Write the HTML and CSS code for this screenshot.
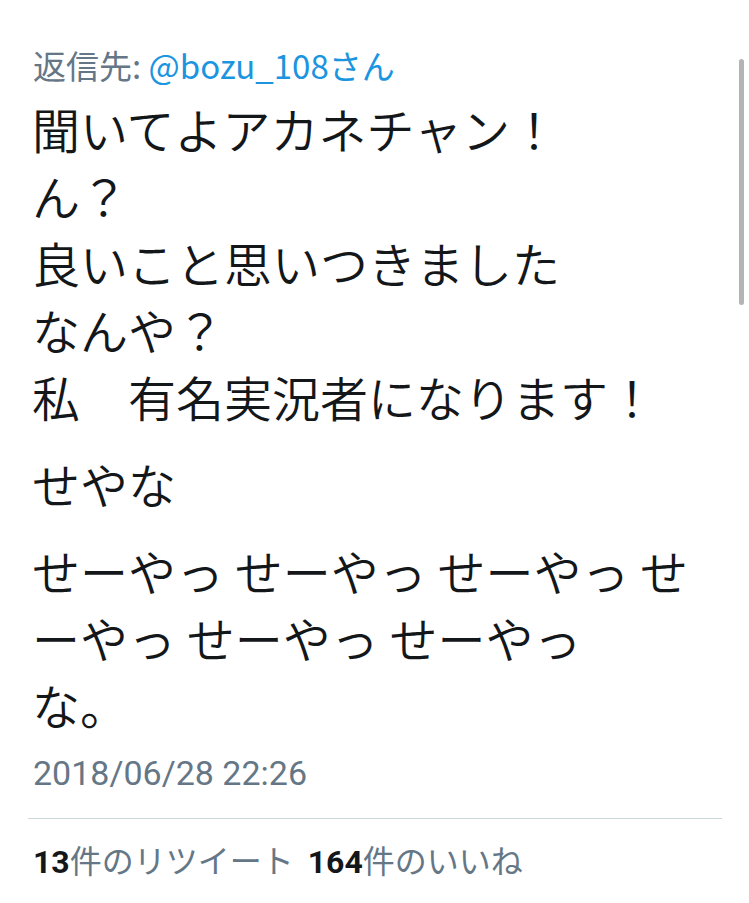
FILE: index.html
```html
<!DOCTYPE html>
<html lang="ja">
  <head>
    <meta charset="UTF-8" />
    <meta name="viewport" content="width=device-width, initial-scale=1.0" />
    <title>ツイート</title>
    <link rel="stylesheet" href="styles.css">
  </head>
  <body>
    <div class="tweet">
      <p class="reply">返信先: <a href="#">@bozu_108さん</a></p>

      <div class="tekst">
        <p>聞いてよアカネチャン！<br>ん？<br>良いこと思いつきました<br>なんや？<br>私　有名実況者になります！</p>
        <p>せやな</p>
        <p>せーやっ せーやっ せーやっ せーやっ せーやっ せーやっ<br>な。</p>
      </div>

      <p class="dato">2018/06/28 22:26</p>

      <div class="stats">
        <span><b>13</b>件のリツイート</span>
        <span><b>164</b>件のいいね</span>
      </div>
    </div>
    <!--scrollbar fra skærmbilledet-->
    <div class="scroll"></div>
  </body>
</html>
```

FILE: styles.css
```css
body {
  margin: 0;
  background-color: #fff;
  color: #14171a;
  font-family: "Noto Sans CJK JP", "Noto Sans", sans-serif;
}
.tweet {
  padding: 45px 27px 0 28px;
}
p {
  margin: 0;
}
.reply {
  padding-left: 5px;
  font-size: 33px;
  line-height: 40px;
  color: #657786;
}
.reply a {
  color: #1b95e0;
  text-decoration: none;
}
.tekst {
  padding-left: 4px;
  margin-top: 10px;
  font-size: 48px;
  font-weight: 350;
  line-height: 67px;
}
.tekst p {
  margin-bottom: 20px;
}
.tekst p:last-child {
  margin-bottom: 0;
}
.dato {
  padding-left: 5px;
  margin-top: 15px;
  padding-bottom: 25px;
  border-bottom: 1px solid #ccd6dd;
  font-family: Roboto, "Noto Sans CJK JP", sans-serif;
  font-size: 34px;
  line-height: 40px;
  color: #657786;
}
.stats {
  display: flex;
  gap: 14px;
  padding-left: 5px;
  margin-top: 23px;
  font-family: Roboto, "Noto Sans CJK JP", sans-serif;
  font-size: 32px;
  line-height: 40px;
  color: #657786;
}
.stats b {
  color: #14171a;
  font-weight: 700;
}
.scroll {
  position: absolute;
  top: 59px;
  left: 739px;
  width: 5px;
  height: 246px;
  border-radius: 3px;
  background-color: #b4b4b4;
}
```
